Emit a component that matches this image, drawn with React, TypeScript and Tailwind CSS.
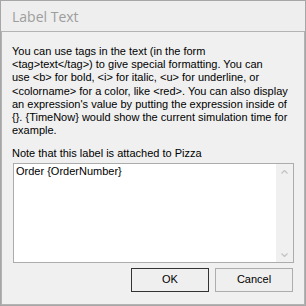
const lines = [
  'You can use tags in the text (in the form',
  '<tag>text</tag>) to give special formatting. You can',
  'use <b> for bold, <i> for italic, <u> for underline, or',
  '<colorname> for a color, like <red>. You can also display',
  "an expression's value by putting the expression inside of",
  '{}. {TimeNow} would show the current simulation time for',
  'example.',
];

function Chevron({ up }: { up?: boolean }) {
  return (
    <svg width="7" height="4" viewBox="0 0 7 4" className="block">
      <polyline
        points={up ? '0.5,3.5 3.5,0.5 6.5,3.5' : '0.5,0.5 3.5,3.5 6.5,0.5'}
        fill="none"
        stroke="#c2c2c2"
        strokeWidth="1.2"
      />
    </svg>
  );
}

export default function App() {
  return (
    <div className="w-[306px] h-[306px] flex flex-col border border-[#a6a6a6] bg-[#eeeeee] font-['Liberation_Sans',Arial,sans-serif] text-[11px] text-black">
      <div className="h-[30px] shrink-0 flex items-center pl-[11px] font-['Open_Sans',sans-serif] text-[14px] text-[#9d9d9d]">
        Label Text
      </div>
      <div className="flex-1 flex flex-col border border-[#b3b3b3] bg-[#f0f0f0] pl-[10px] pr-[10px] pt-[13px] leading-[13.2px]">
        <div className="whitespace-nowrap">
          {lines.map((l) => (
            <div key={l}>{l}</div>
          ))}
        </div>
        <div className="mt-[10px] whitespace-nowrap">Note that this label is attached to Pizza</div>
        <div className="mt-[2px] ml-[1px] h-[100px] flex border border-[#acacac] bg-white">
          <div className="flex-1 pl-[2px] pt-px">Order {'{OrderNumber}'}</div>
          <div className="w-[17px] bg-[#f0f0f0] flex flex-col items-center justify-between pt-[6px] pb-[5px]">
            <Chevron up />
            <Chevron />
          </div>
        </div>
        <div className="mt-[5px] mr-[1px] flex justify-end gap-[6px]">
          <button className="w-[78px] h-[24px] border border-[#333333] bg-[#efefef] text-[11px] leading-none">
            OK
          </button>
          <button className="w-[78px] h-[24px] border border-[#adadad] bg-[#efefef] text-[11px] leading-none">
            Cancel
          </button>
        </div>
      </div>
    </div>
  );
}
